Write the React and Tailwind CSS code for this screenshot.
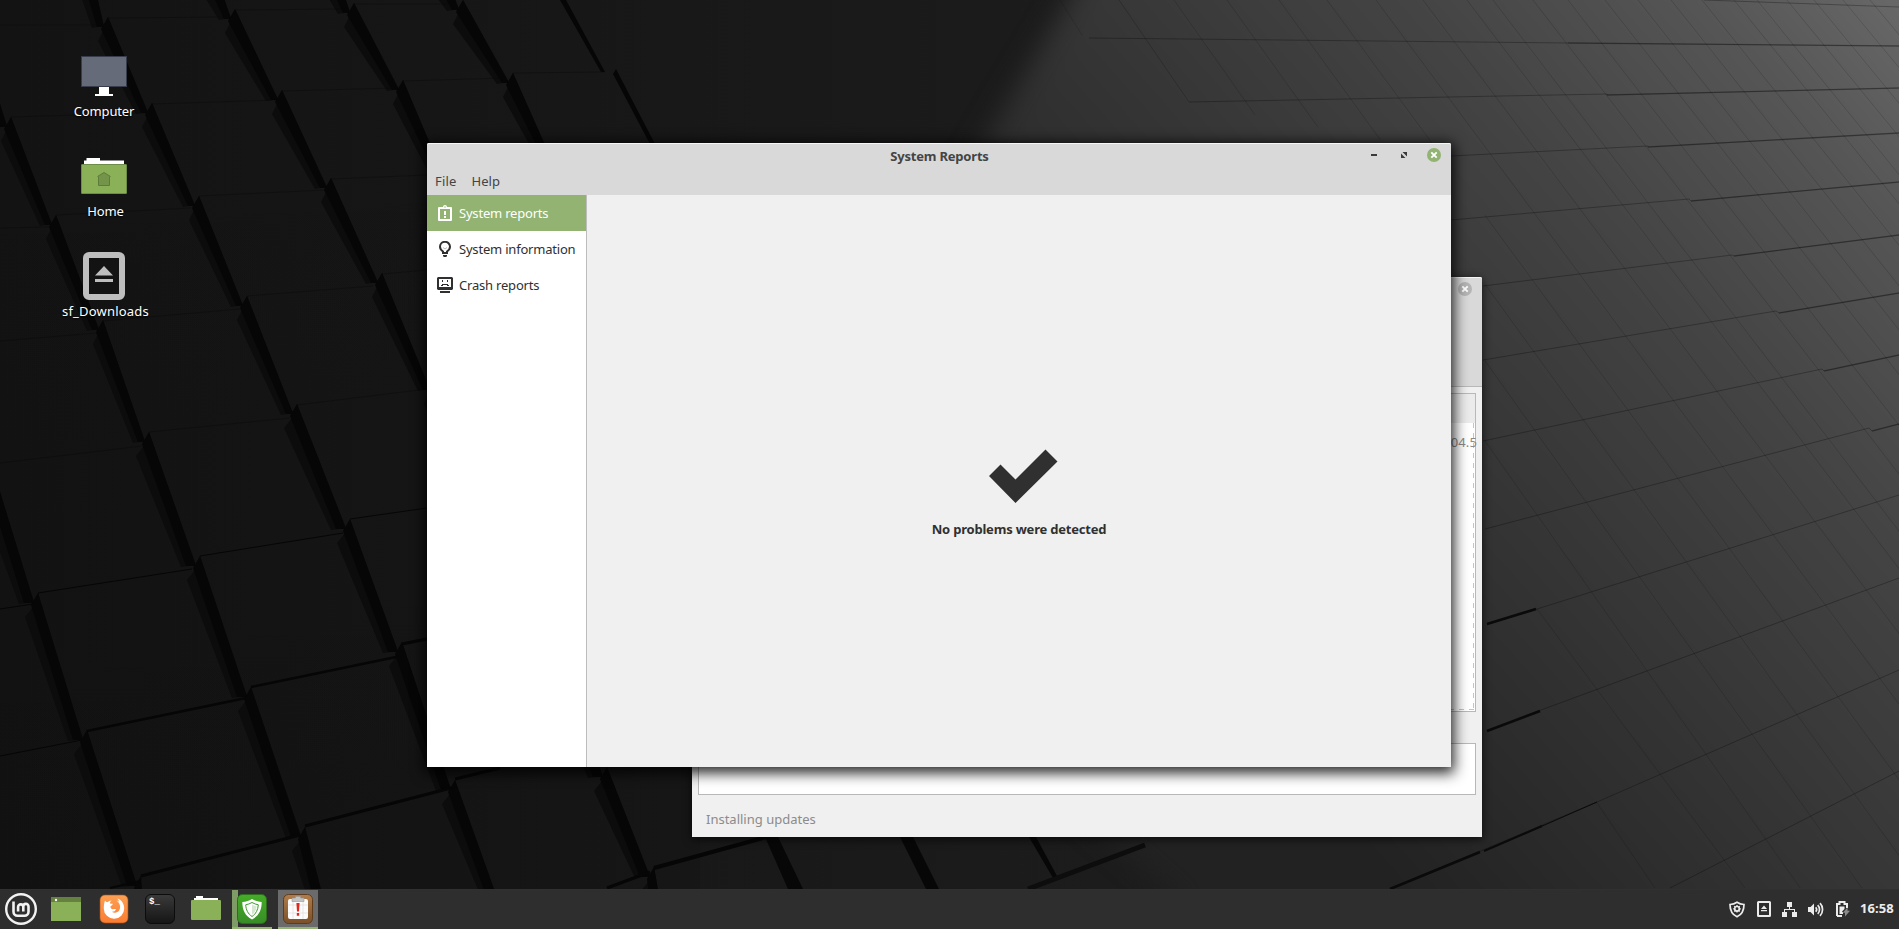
import React from "react";

const FONT = "font-['Noto_Sans','Open_Sans',sans-serif]";

/* ---------- Wallpaper ---------- */

const RIDGES = [
  [[-9, 75], [11, 117], [56, 215], [103, 320], [149, 432], [200, 556], [251, 687], [305, 827], [327, 888]],
  [[92, -25], [108, 17], [152, 103], [199, 196], [247, 296], [297, 404], [350, 519], [402, 642], [455, 780], [501, 888]],
  [[216, -25], [235, 9], [282, 90], [331, 178], [382, 273], [434, 380], [490, 500], [548, 630], [607, 767], [654, 867], [664, 892]],
  [[336, -30], [354, 3], [403, 80], [450, 172]],
  [[444, -30], [463, 0], [513, 73], [560, 160]],
  [[-6, 475], [0, 492], [38, 593], [87, 730], [141, 876], [146, 888]],
];

const SEAMS = [
  [0, 25, 103, 25, 0.5], [108, 18, 230, 17, 0.5], [235, 10, 345, 9, 0.5], [354, 4, 452, 4, 0.5],
  [11, 117, 146, 113, 0.5], [152, 104, 277, 100, 0.5], [282, 91, 396, 88, 0.5], [403, 81, 505, 78, 0.5], [513, 73, 605, 72, 0.5],
  [0, 228, 50, 227, 0.5], [56, 215, 191, 208, 0.5], [199, 196, 325, 190, 0.5], [331, 179, 427, 175, 0.5],
  [0, 341, 97, 333, 0.5], [103, 321, 240, 309, 0.5], [247, 296, 373, 286, 0.5], [382, 274, 427, 270, 0.5],
  [0, 463, 142, 446, 0.5], [149, 432, 290, 418, 0.5], [297, 405, 427, 389, 0.5],
  [0, 609, 33, 604, 1], [38, 593, 192, 569, 1], [200, 556, 343, 533, 1], [350, 519, 427, 508, 1],
  [0, 756, 82, 740, 1], [87, 731, 246, 698, 2.4], [251, 687, 396, 657, 2.4], [402, 644, 427, 639, 3],
  [141, 876, 300, 835, 3], [305, 826, 451, 788, 3], [455, 779, 500, 768, 3],
  [110, 888, 140, 881, 2], [607, 888, 650, 872, 3], [654, 868, 770, 836, 4],
];

const COURSES = [
  "1704,0 1899,7", "1089,38 1568,43 1899,46", "1189,102 1607,94 1607,95 1899,88",
  "1451,156 1648,146 1648,147 1899,133", "1451,220 1689,199 1691,201 1899,182",
  "1483,286 1732,255 1734,256 1899,235", "1483,360 1776,311 1779,313 1899,293",
  "1483,441 1822,369 1824,371 1899,355", "1485,529 1869,428 1872,431 1899,424",
  "1487,624 1537,609 1899,495", "1487,731 1541,710 1899,578",
  "1392,888 1483,850 1597,802 1899,670", "1670,888 1899,771",
];

const BRIGHT_COURSES = [
  "1568,43 1899,46", "1607,95 1899,88", "1648,147 1899,133", "1691,201 1899,182", "1734,256 1899,235",
  "1779,313 1899,293", "1824,371 1899,355", "1872,431 1899,424",
];

const JOINTS = [
  1174, 1227, 1279, 1327, 1376, 1423, 1467, 1493, 1533, 1568, 1605, 1638, 1671, 1702, 1734, 1757, 1787, 1814, 1843, 1870,
];

function Wallpaper() {
  return (
    <svg className="absolute inset-0" width="1899" height="889" viewBox="0 0 1899 889">
      <defs>
        <linearGradient id="base" x1="0" y1="0" x2="1" y2="0">
          <stop offset="0" stopColor="#131313" />
          <stop offset="0.3" stopColor="#171717" />
          <stop offset="0.58" stopColor="#1c1c1c" />
          <stop offset="0.75" stopColor="#212121" />
        </linearGradient>
        <linearGradient id="shade" x1="0" y1="0" x2="0" y2="1">
          <stop offset="0" stopColor="#000" stopOpacity="0" />
          <stop offset="1" stopColor="#000" stopOpacity="0.1" />
        </linearGradient>
        <linearGradient id="light" gradientUnits="userSpaceOnUse" x1="1180" y1="640" x2="1899" y2="0">
          <stop offset="0" stopColor="#222222" />
          <stop offset="0.35" stopColor="#353535" />
          <stop offset="0.62" stopColor="#444444" />
          <stop offset="0.85" stopColor="#565656" />
          <stop offset="1" stopColor="#686868" />
        </linearGradient>
        <filter id="soft" x="-20%" y="-20%" width="140%" height="140%" colorInterpolationFilters="sRGB"><feGaussianBlur stdDeviation="13" /></filter>
        <filter id="fine" colorInterpolationFilters="sRGB"><feGaussianBlur stdDeviation="0.7" /></filter>
      </defs>
      <rect width="1899" height="889" fill="url(#base)" />
      <rect width="700" height="889" fill="url(#shade)" />
      <path d="M1105 -60 L955 190 L955 700 L1180 900 L1180 960 L2000 960 V-60Z" fill="url(#light)" filter="url(#soft)" />
      <g filter="url(#fine)">
        {RIDGES.map((r, i) =>
          r.slice(0, -1).map(([x, y], k) => {
            const [nx, ny] = r[k + 1];
            const w = y > 400 ? 16 : 13;
            return (
              <g key={i + "-" + k}>
                <polygon points={`${x - 5},${y + 14} ${x},${y} ${nx - 4},${ny + 9} ${nx - w - 3},${ny + 11} ${x - w + 3},${y + 24}`} fill="#0c0c0c" />
                <polygon points={`${x - 7},${y + 12} ${x},${y} ${nx - 4},${ny + 10} ${nx - w + 2},${ny + 10}`} fill="#060606" />
              </g>
            );
          })
        )}
        <polygon points="560,0 566,0 605,72 601,72" fill="#060606" />
        <polygon points="613,74 616,69 656,146 651,146" fill="#060606" />
        <polygon points="765,837 778,837 803,889 788,889" fill="#070707" />
        <polygon points="900,837 913,837 939,889 926,889" fill="#070707" />
        <polygon points="1029,837 1036,837 1057,876 1053,878" fill="#070707" />
        <line x1="1028" y1="889" x2="1145" y2="845" stroke="#0d0d0d" strokeWidth="5" />
        {SEAMS.map(([a, b, c, d, w], i) => (
          <line key={i} x1={a} y1={b} x2={c} y2={d} stroke="#060606" strokeWidth={w} strokeOpacity={w < 0.7 ? 0.6 : 1} />
        ))}
      </g>
      <g fill="none" stroke="#000">
        <clipPath id="field"><path d="M1000 0H1899V889H1793L1597 802L1537 609L1485 560V160L1189 102L1119 0Z" /></clipPath>
        <line x1="1060" y1="0" x2="1082" y2="35" strokeOpacity="0.12" />
        <line x1="1119" y1="0" x2="1189" y2="102" strokeOpacity="0.18" />
        <line x1="1537" y1="609" x2="1745" y2="888" strokeOpacity="0.14" />
        <line x1="1597" y1="803" x2="1655" y2="888" strokeOpacity="0.14" />
        {JOINTS.map((x) => (
          <line key={x} x1={x} y1="0" x2={x + 888 * (0.695 + ((x - 1119) / 700) * 0.13)} y2="888" strokeOpacity="0.14" clipPath="url(#field)" />
        ))}
        {COURSES.map((p) => <polyline key={p} points={p} strokeOpacity="0.28" />)}
        {BRIGHT_COURSES.map((p) => <polyline key={p} points={p} strokeOpacity="0.22" strokeWidth="1.3" />)}
      </g>
      <g stroke="#0a0a0a" strokeWidth="2.6" filter="url(#fine)">
        <line x1="1487" y1="624" x2="1536" y2="609" />
        <line x1="1487" y1="731" x2="1540" y2="711" />
        <line x1="1390" y1="889" x2="1480" y2="852" />
        <line x1="1484" y1="851" x2="1542" y2="826" strokeWidth="2" />
        <line x1="1540" y1="827" x2="1597" y2="802" strokeWidth="1" />
      </g>
    </svg>
  );
}

/* ---------- Desktop icons ---------- */

const ComputerIcon = () => (
  <svg width="48" height="48" viewBox="0 0 48 48">
    <rect x="1.5" y="4.5" width="45" height="30" fill="#656b79" stroke="#373d4b" />
    <path d="M19 35h10v7h4v2H15v-2h4z" fill="#fff" />
  </svg>
);

const HomeIcon = () => (
  <svg width="48" height="48" viewBox="0 0 48 48">
    <path d="M4 12V8.500h2.500V6H20v2.500h24V13H4z" fill="#fff" />
    <rect x="1.500" y="12.500" width="45" height="29" rx="0.500" fill="#8ab158" stroke="#6d8c46" />
    <path d="M17.500 24.500 24 20.500l6.500 4M18.500 24.500v9h11v-9" fill="#74944a" stroke="#5f7b3b" />
  </svg>
);

const DriveIcon = () => (
  <svg width="48" height="48" viewBox="0 0 48 48">
    <rect x="6" y="3" width="36" height="42" rx="3" fill="#131313" stroke="#bebebe" strokeWidth="6" />
    <path d="M24 14l9 9.500H15zM15 27h18v3H15z" fill="#bebebe" />
  </svg>
);

const DESKTOP = [
  { Icon: ComputerIcon, label: "Computer", cls: "tracking-[-0.15px]" },
  { Icon: HomeIcon, label: "Home", cls: "pl-[3px] tracking-[-0.1px]" },
  { Icon: DriveIcon, label: "sf_Downloads", cls: "pl-[3px] tracking-[0.2px]" },
];

/* ---------- Windows ---------- */

const ReportIcon = () => (
  <svg width="16" height="16" viewBox="0 0 16 16" className="shrink-0">
    <path d="M2 3h12v12H2z" fill="none" stroke="#fff" strokeWidth="2" strokeLinejoin="round" />
    <path d="M4.500 2H6a2 2 0 0 1 4 0h1.500v2h-7z" fill="#fff" />
    <circle cx="8" cy="2" r="0.700" fill="#92b372" />
    <path d="M7 6h2v4H7zM7 11h2v2H7z" fill="#fff" />
  </svg>
);

const BulbIcon = () => (
  <svg width="16" height="16" viewBox="0 0 16 16" className="shrink-0">
    <path d="M6 12V10.500C4.500 9.500 3 8 3 5.800a5 5 0 0 1 10 0c0 2.200-1.500 3.700-3 4.700V12z" fill="none" stroke="#303030" strokeWidth="2" />
    <path d="M6 6.500l2 1.500 2-1.500" fill="none" stroke="#bbb" />
    <path d="M6 14h4v1.200L9 16H7l-1-.8z" fill="#303030" />
  </svg>
);

const CrashIcon = () => (
  <svg width="16" height="16" viewBox="0 0 16 16" className="shrink-0">
    <path fillRule="evenodd" d="M1 0h14l1 1v11l-1 1H1l-1-1V1zM2 2v8h12V2z" fill="#303030" />
    <path d="M5 3h1v2H5zM10 3h1v2h-1zM4 8h1V7h6v1h1v1h-2V8H6v1H4z" fill="#303030" />
    <path d="M3 14h10v2H3z" fill="#303030" />
  </svg>
);

const CloseButton = ({ color }) => (
  <svg width="14" height="14" viewBox="0 0 14 14">
    <circle cx="7" cy="7" r="7" fill={color} />
    <path d="M4.300 4.300l5.400 5.400M9.700 4.300L4.300 9.700" stroke="#fff" strokeWidth="1.900" />
  </svg>
);

function UpdateWindow() {
  return (
    <div className="absolute left-[692px] top-[277px] flex h-[560px] w-[790px] flex-col rounded-t-[2px] bg-[#f0f0f0] shadow-[0_2px_10px_rgba(0,0,0,0.7)]">
      <div className="flex h-[110px] justify-end rounded-t-[2px] border-t border-b border-t-[#f5f5f5] border-b-[#b8b8b8] bg-[#d9d9d9] pr-[10px] pt-[4px]">
        <CloseButton color="#b5b5b5" />
      </div>
      <div className="mx-[6px] mt-[6px] flex h-[319px] flex-col border border-[#b8b8b8] bg-white">
        <div className="h-[29px] shrink-0 bg-[#ebebeb]" />
        <div className="mr-px flex grow flex-col">
          <div className="flex grow justify-end bg-[repeating-linear-gradient(to_bottom,#c4c4c4_0_5px,transparent_5px_10px)] bg-[length:1px_100%] bg-right bg-no-repeat pt-[9px]">
            <span className="mr-[-3px] h-5 whitespace-nowrap text-[13px] leading-5 tracking-[0.1px] text-[#8a8a8a]">5.15.0-43.46~20.04.5</span>
          </div>
          <div className="mb-px h-px bg-[repeating-linear-gradient(to_left,#c4c4c4_0_5px,transparent_5px_10px)]" />
        </div>
      </div>
      <div className="mx-[6px] mt-[31px] h-[52px] border border-[#b8b8b8] bg-white" />
      <div className="flex grow items-center pl-[14px] pt-[7px] text-[13px] text-[#8b8b8b]">Installing updates</div>
    </div>
  );
}

const SIDEBAR = [
  { Icon: ReportIcon, label: "System reports", cls: "bg-[#92b372] text-white" },
  { Icon: BulbIcon, label: "System information", cls: "text-[#303030]" },
  { Icon: CrashIcon, label: "Crash reports", cls: "text-[#303030]" },
];

function ReportsWindow() {
  return (
    <div className="absolute left-[427px] top-[143px] flex h-[624px] w-[1024px] flex-col rounded-t-[2px] bg-[#f0f0f0] shadow-[0_3px_14px_3px_rgba(0,0,0,0.85)]">
      <div className="h-[52px] shrink-0 rounded-t-[2px] border-t border-[#f7f7f7] bg-[#d9d9d9] text-[#444]">
        <div className="flex h-[24px] items-start">
          <div className="grow pl-[1px] text-center text-[13px] font-bold leading-[24px] tracking-[-0.2px]"><span className="ml-[98px]">System Reports</span></div>
          <div className="flex w-[98px] items-center pt-[4px] pl-[18px]">
            <svg width="6" height="14" viewBox="0 0 6 14"><path d="M0 6h6v2H0z" fill="#3b3b3b" /></svg>
            <svg className="ml-[24px]" width="6" height="14" viewBox="0 0 6 14">
              <path d="M1.500 4H6v4.500zM0 5.500V10h4.500z" fill="#3b3b3b" />
            </svg>
            <span className="ml-[20px]"><CloseButton color="#92b372" /></span>
          </div>
        </div>
        <div className="flex h-[27px] items-center gap-[15px] pl-[8px] pt-[1px] text-[13px]">
          <span className="tracking-[0.2px]">File</span>
          <span>Help</span>
        </div>
      </div>
      <div className="flex grow">
        <div className="w-[160px] border-r border-[#bdbdbd] bg-white">
          {SIDEBAR.map(({ Icon, label, cls }) => (
            <div key={label} className={"flex h-9 items-center gap-[6px] pl-[10px] text-[13px] tracking-[-0.2px] whitespace-nowrap " + cls}>
              <Icon />
              <span className="pt-[2px]">{label}</span>
            </div>
          ))}
        </div>
        <div className="flex grow flex-col items-center pt-[254px]">
          <svg className="ml-[7px]" width="70" height="54" viewBox="0 0 70 54">
            <path d="M1 27L12.500 15.500 27.500 30.500 57.500 0.500 69.500 12.500 27.500 54z" fill="#303030" />
          </svg>
          <span className="mt-[16px] text-[13px] font-bold leading-5 tracking-[-0.2px] text-[#303030]">No problems were detected</span>
        </div>
      </div>
    </div>
  );
}

/* ---------- Panel ---------- */

const MenuIcon = () => (
  <svg width="32" height="32" viewBox="0 0 32 32" fill="none" stroke="#f2f2f2">
    <circle cx="16" cy="16" r="14.800" strokeWidth="2.400" />
    <path d="M8.500 8.500v10.200a4 4 0 0 0 4 4h7a4 4 0 0 0 4-4v-5.200a2.600 2.600 0 0 0-5.200 0V18.500M18.300 14a2.600 2.600 0 0 0-5.200 0v4.500" strokeWidth="2.600" />
  </svg>
);

const ShowDesktopIcon = () => (
  <svg width="30" height="24" viewBox="0 0 30 24">
    <rect width="30" height="24" fill="#8ab158" />
    <rect width="30" height="5" fill="#64813f" />
    <circle cx="5" cy="3" r="1.200" fill="#fff" />
  </svg>
);

const FirefoxIcon = () => (
  <svg width="30" height="30" viewBox="0 0 30 30">
    <defs><linearGradient id="fox" x1="0" y1="0" x2="0" y2="1"><stop offset="0" stopColor="#fda052" /><stop offset="1" stopColor="#fa7c31" /></linearGradient></defs>
    <rect x="1" y="1" width="28" height="28" rx="5" fill="url(#fox)" stroke="#a5521f" strokeWidth="0.600" />
    <path d="M6 6.500c.6 1 1.300 1.600 2.300 1.800 1.300-1 2.700-1.600 4.200-1.800-1 .8-1.600 1.800-1.500 3 .8.300 1.800.2 2.800.3-.1 1.200-1.300 1.700-2.200 2.400-.4 1 .2 2.300 1.300 2.800 1.500.7 2.700-.3 4.100.2-.6 1.900-2.200 2.700-4.200 2.500 2.400 1.600 5.600 1.200 7.300-1.200 2-3 1-7-2.500-9.900 1 .2 1.800.6 2.500 1.200-.3-1.400-.9-2.300-1.900-3.200 4.200 1 7 5.200 7 9.800A10.200 10.200 0 0 1 4.800 14.700C4.800 12 5 9.200 6 6.500z" fill="#fff" />
  </svg>
);

const TerminalIcon = () => (
  <span className="flex size-[30px] items-start rounded-[6px] border border-[#0c0c0c] bg-linear-to-b from-[#3a3a3a] to-[#161616] pl-[3px] pt-[2px] font-['Liberation_Mono',monospace] text-[9px] font-bold leading-[11px] text-white">
    $_
  </span>
);

const FilesIcon = () => (
  <svg width="30" height="24" viewBox="0 0 30 24">
    <path d="M3 5V2h2V0h7v2h15v4H3z" fill="#fff" />
    <rect y="4" width="30" height="20" rx="1" fill="#8ab158" />
  </svg>
);

const UpdateIcon = () => (
  <svg width="30" height="30" viewBox="0 0 30 30">
    <defs><linearGradient id="upd" x1="0" y1="0" x2="0" y2="1"><stop offset="0" stopColor="#44ac27" /><stop offset="1" stopColor="#388d26" /></linearGradient></defs>
    <rect x="0.500" y="0.500" width="29" height="29" rx="5" fill="url(#upd)" stroke="#2d6d1c" />
    <path d="M15 5c2.800 1.800 6 2.800 9.700 3 0 7.800-2.700 13.800-9.700 17.500-7-3.700-9.700-9.700-9.700-17.500 3.700-.2 6.900-1.200 9.700-3z" fill="#fff" />
    <path d="M15 8.500c2.200 1.200 4.200 2 6.300 2.300-.3 5-2.200 9-6.300 11.700-4.100-2.700-6-6.700-6.300-11.700 2.100-.3 4.100-1.100 6.300-2.300z" fill="#fff" stroke="#3d9b27" strokeWidth="1" />
    <path d="M15 10.400c1.600.9 3.100 1.500 4.600 1.800-.4 3.700-1.800 6.500-4.600 8.500z" fill="#d6e8d2" />
  </svg>
);

const ReportAppIcon = () => (
  <svg width="30" height="30" viewBox="0 0 30 30">
    <defs><linearGradient id="rep" x1="0" y1="0" x2="0" y2="1"><stop offset="0" stopColor="#b17d4b" /><stop offset="1" stopColor="#7a5029" /></linearGradient></defs>
    <rect x="0.500" y="0.500" width="29" height="29" rx="5" fill="url(#rep)" stroke="#5f3d1c" />
    <rect x="5" y="5" width="20" height="20" rx="2" fill="#fcfcfc" />
    <path d="M5 11h20M5 19h20M10 5v20M20 5v20" stroke="#e6dede" strokeWidth="0.800" />
    <path d="M9 4h3.500V2.500h5V4H21v3.500H9z" fill="#c3c3c3" stroke="#999" strokeWidth="0.600" />
    <path d="M13.400 9h3.200l-.6 8.500h-2zM13.800 19h2.400v2.800h-2.400z" fill="#e0281f" />
  </svg>
);

const TRAY = {
  shield: (
    <svg width="16" height="17" viewBox="0 0 16 17">
      <path d="M8 1.200C10 2.500 12.500 3.300 15 3.500c0 6-2 10-7 12.300C3 13.500 1 9.500 1 3.500 3.500 3.300 6 2.500 8 1.200z" fill="none" stroke="#ececec" strokeWidth="1.700" />
      <circle cx="8" cy="7.800" r="2.300" fill="none" stroke="#ececec" strokeWidth="1.700" />
      <path d="M8 4v1.500M8 10v1.600M4.200 7.800h1.500M10.300 7.800h1.500M5.300 5.100l1 1M9.700 9.500l1 1M10.700 5.100l-1 1M6.300 9.500l-1 1" stroke="#ececec" strokeWidth="1.300" />
    </svg>
  ),
  drive: (
    <svg width="14" height="16" viewBox="0 0 14 16">
      <rect x="1" y="1" width="12" height="14" rx="0.500" fill="none" stroke="#ececec" strokeWidth="2" />
      <path d="M7 4.500l3 3.500H4zM4 9h6v1.200H4z" fill="#ececec" />
    </svg>
  ),
  network: (
    <svg width="15" height="15" viewBox="0 0 15 15">
      <path d="M5 0h5v5H8v2h5v3h2v5h-5v-5h2V8H3v2h2v5H0v-5h2V7h5V5H5z" fill="#ececec" />
    </svg>
  ),
  volume: (
    <svg width="16" height="15" viewBox="0 0 16 15">
      <path d="M0 5h2.500L6 1.500v12L2.500 10H0z" fill="#ececec" />
      <path d="M7.700 5.200a3.500 3.500 0 0 1 0 4.600M9.700 3.200a6 6 0 0 1 0 8.600M12 1.200a9 9 0 0 1 0 12.600" fill="none" stroke="#ececec" strokeWidth="1.700" />
    </svg>
  ),
  battery: (
    <svg width="15" height="16" viewBox="0 0 15 16">
      <path d="M1 15V3h2.500V1h5v2H11v4M1 15h5" fill="none" stroke="#ececec" strokeWidth="2" />
      <path d="M3.500 5.500h5V8L6 10.500l1 1v1.500H3.500z" fill="#ececec" />
      <path d="M11.500 6.500v3.300H14L9 15.500v-3.700H6.800z" fill="#8b8b8b" />
    </svg>
  ),
};

function Panel() {
  return (
    <div className="flex h-10 items-stretch border-t border-[#303030] bg-[#2e2e2e]">
      <div className="flex w-[43px] items-center pl-[5px] pb-[1px]"><MenuIcon /></div>
      <div className="flex w-[46px] items-center justify-center pb-[1px]"><ShowDesktopIcon /></div>
      <div className="flex w-[50px] items-center justify-center pb-[2px]"><FirefoxIcon /></div>
      <div className="flex w-[42px] items-center justify-center pb-[2px]"><TerminalIcon /></div>
      <div className="flex w-[50px] items-center justify-center pb-[3px]"><FilesIcon /></div>
      <div className="ml-px flex w-10 items-center justify-center border-b-2 border-[#92b372] bg-linear-to-r from-[#7f9c66] from-15% to-transparent to-15%"><UpdateIcon /></div>
      <div className="ml-[6px] flex w-10 items-center justify-center border-b-2 border-[#92b372] bg-[#6b6b6b]"><ReportAppIcon /></div>
      <div className="ml-auto flex items-center pr-[5px] pb-[1px]">
        {TRAY.shield}
        <span className="ml-[12px]">{TRAY.drive}</span>
        <span className="ml-[11px]">{TRAY.network}</span>
        <span className="ml-[11px]">{TRAY.volume}</span>
        <span className="ml-[12px]">{TRAY.battery}</span>
        <span className="ml-[9px] w-[34px] whitespace-nowrap text-[13px] font-bold tracking-[0.1px] text-[#ececec]">16:58</span>
      </div>
    </div>
  );
}

export default function App() {
  return (
    <div className={"flex h-[929px] w-[1899px] flex-col overflow-hidden bg-[#131313] " + FONT}>
      <div className="relative h-[889px] overflow-hidden">
        <Wallpaper />
        <div className="relative flex w-[208px] flex-col items-center pt-[52px]">
          {DESKTOP.map(({ Icon, label, cls }) => (
            <div key={label} className="flex h-[100px] flex-col items-center">
              <Icon />
              <span className={"text-[13px] leading-[22px] text-white [text-shadow:0_1px_2px_#000] " + cls}>{label}</span>
            </div>
          ))}
        </div>
        <UpdateWindow />
        <ReportsWindow />
      </div>
      <Panel />
    </div>
  );
}
